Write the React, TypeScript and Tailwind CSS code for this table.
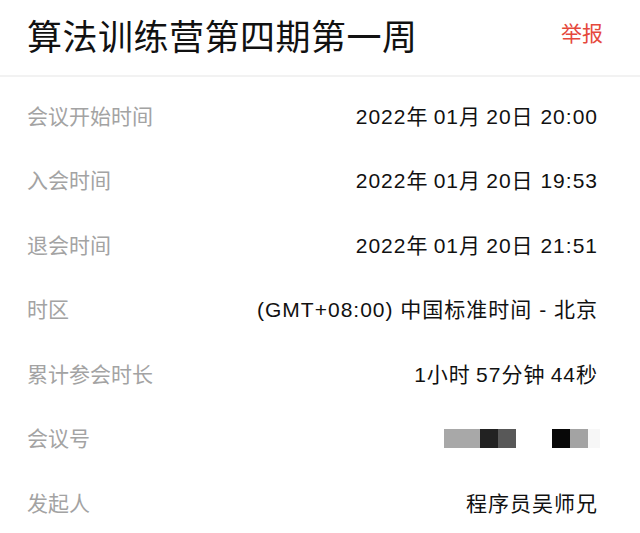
import React from 'react'

const rows: { label: string; value?: string }[] = [
    { label: '会议开始时间', value: '2022年\u200901月\u200920日 20:00' },
    { label: '入会时间', value: '2022年\u200901月\u200920日 19:53' },
    { label: '退会时间', value: '2022年\u200901月\u200920日 21:51' },
    { label: '时区', value: '(GMT+08:00) 中国标准时间 - 北京' },
    { label: '累计参会时长', value: '1小时\u200957分钟\u200944秒' },
    { label: '会议号' },
    { label: '发起人', value: '程序员吴师兄' },
]

// pixelated meeting id
function MaskedId() {
    return (
        <div className="flex items-center -mr-[2px]">
            <div className="flex h-[19px]">
                <div className="w-[36px] bg-[#a8a8a8]" />
                <div className="w-[18px] bg-[#222222]" />
                <div className="w-[18px] bg-[#585858]" />
            </div>
            <div className="w-[36px]" />
            <div className="flex h-[19px]">
                <div className="w-[18px] bg-[#080808]" />
                <div className="w-[18px] bg-[#a3a3a3]" />
                <div className="w-[12px] bg-[#f7f7f7]" />
            </div>
        </div>
    )
}

export default function App() {
    return (
        <div
            className="w-[640px] h-[533px] bg-white overflow-hidden"
            style={{ fontFamily: '"Liberation Sans", "Noto Sans CJK SC", sans-serif' }}
        >
            <div className="flex items-center justify-between h-[77px] pl-[27px] pr-[37px] border-b-2 border-[#f2f2f2]">
                <h1 className="text-[35px] leading-none text-[#111111] tracking-[0.5px]">算法训练营第四期第一周</h1>
                <span className="text-[21px] text-[#e5483c] -mt-[8px]">举报</span>
            </div>
            <div className="flex flex-col pt-[7px]">
                {rows.map((row) => (
                    <div key={row.label} className="flex items-center justify-between h-[64.5px] pl-[27px] pr-[42px]">
                        <span className="text-[21px] text-[#a3a3a3]">{row.label}</span>
                        {row.value ? (
                            <span className="text-[21px] text-[#111111] tracking-[1px]">{row.value}</span>
                        ) : (
                            <MaskedId />
                        )}
                    </div>
                ))}
            </div>
        </div>
    )
}
